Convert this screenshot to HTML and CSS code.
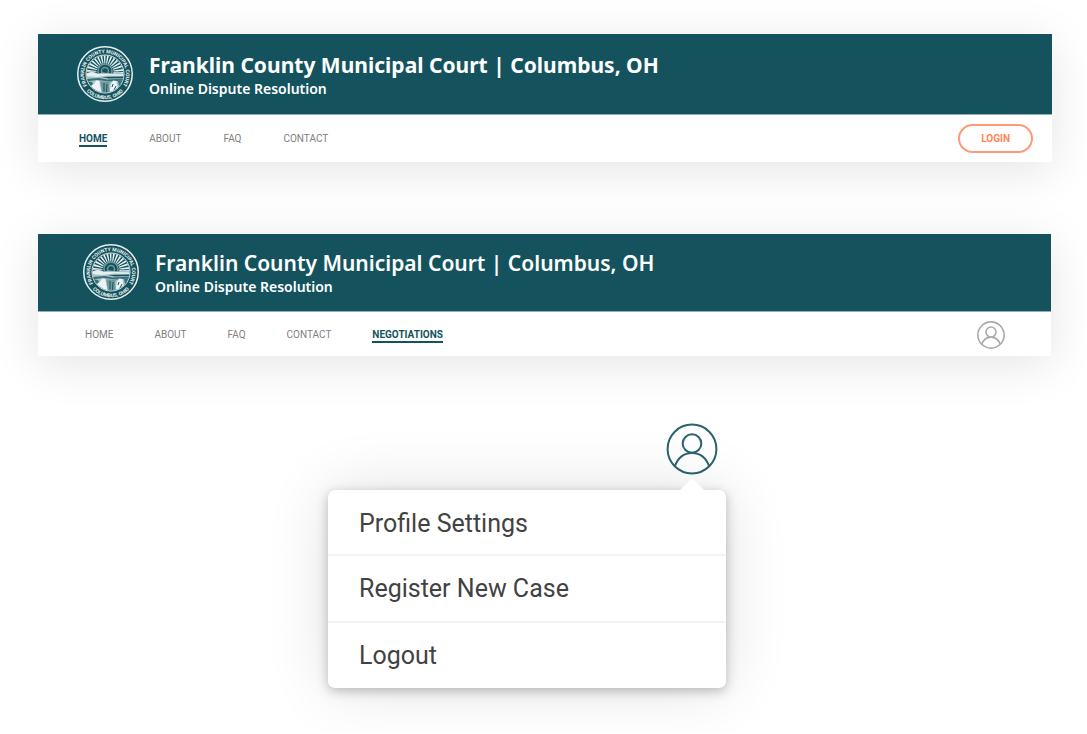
FILE: index.html
```html
<!DOCTYPE html>
<html lang="en">
<head>
<meta charset="utf-8">
<meta name="viewport" content="width=device-width, initial-scale=1">
<title>Franklin County Municipal Court | Columbus, OH</title>
<link rel="stylesheet" href="styles.css">
</head>
<body>
<svg class="sprites" width="0" height="0" aria-hidden="true">
  <symbol id="person" viewBox="0 0 52 52">
    <g fill="none" stroke="currentColor">
      <circle cx="26" cy="26" r="24.4"/>
      <circle cx="26" cy="20.5" r="9.3"/>
      <path d="M8.8 43.4 C12 34.5 18 30 26 30 C34 30 40 34.5 43.2 43.4"/>
    </g>
  </symbol>
</svg>

<main class="page">
  <header class="site-header">
    <div class="brand">
      <svg class="seal" viewBox="0 0 112 112" aria-hidden="true">
        <defs>
          <path id="arc-top" d="M26.3 85.7 A42 42 0 1 1 85.7 85.7"/>
          <path id="arc-bottom" d="M18 89 A50 50 0 0 0 94 89"/>
          <clipPath id="disc"><circle cx="56" cy="56" r="37"/></clipPath>
        </defs>
        <g id="seal">
          <circle cx="56" cy="56" r="54.5" fill="none" stroke="#e6eff0" stroke-width="3"/>
          <circle cx="56" cy="56" r="38" fill="#14535d" stroke="#dbe7e9" stroke-width="2"/>
          <g clip-path="url(#disc)">
            <circle cx="56" cy="52" r="27" fill="none" stroke="#e6eff0" stroke-width="20" stroke-dasharray="3 2.65"/>
            <circle cx="56" cy="50" r="14" fill="#14535d" stroke="#6f989e" stroke-width="3"/>
            <circle cx="56" cy="50" r="7" fill="none" stroke="#6f989e" stroke-width="3"/>
            <path d="M16 55 L30 51 L42 55 L52 53 L70 55 L80 51 L96 55 V96 H16 Z" fill="#a9c3c7"/>
            <path d="M16 56 L30 52 L42 56 L68 56 L96 57 V60 L62 59 L38 62 L16 60 Z" fill="#e6eff0"/>
            <path d="M16 66 L44 64 L60 67 L96 65 V69 L66 71 L40 68 L16 71 Z" fill="#35707a"/>
            <path d="M50 62 L96 61 V64 L64 65 Z" fill="#14535d"/>
            <path d="M24 80 L34 76 L38 69 L45 70 L46 80 L50 96 H18 Z M68 76 L72 69 L79 70 L80 80 L88 84 L82 96 H64 Z" fill="#edf4f5"/>
            <path d="M46 71 L66 71 L64 78 L66 94 L50 94 L48 80 Z" fill="#6f989e"/>
            <path d="M18 70 L30 72 L32 76 L24 84 Z M82 70 L94 68 L90 80 L84 80 Z" fill="#35707a"/>
            <path d="M72 76 L70 82 M78 80 L74 88 M54 74 V91 M60 76 L59 92" fill="none" stroke="#14535d" stroke-width="2"/>
          </g>
          <text class="seal-text"><textPath href="#arc-top" startOffset="50%">FRANKLIN COUNTY MUNICIPAL COURT</textPath></text>
          <text class="seal-text"><textPath href="#arc-bottom" startOffset="50%">COLUMBUS, OHIO</textPath></text>
        </g>
      </svg>
      <div class="brand-text">
        <div class="brand-title">Franklin County Municipal Court | Columbus, OH</div>
        <div class="brand-subtitle">Online Dispute Resolution</div>
      </div>
    </div>
    <div class="nav-bar">
      <nav class="nav" aria-label="Visitor">
        <a class="nav-link active" href="#home">HOME</a>
        <a class="nav-link" href="#about">ABOUT</a>
        <a class="nav-link" href="#faq">FAQ</a>
        <a class="nav-link" href="#contact">CONTACT</a>
      </nav>
      <button class="login" type="button">LOGIN</button>
    </div>
  </header>

  <header class="site-header compact">
    <div class="brand">
      <svg class="seal" viewBox="0 0 112 112" aria-hidden="true"><use href="#seal"/></svg>
      <div class="brand-text">
        <div class="brand-title">Franklin County Municipal Court | Columbus, OH</div>
        <div class="brand-subtitle">Online Dispute Resolution</div>
      </div>
    </div>
    <div class="nav-bar">
      <nav class="nav" aria-label="Member">
        <a class="nav-link" href="#home">HOME</a>
        <a class="nav-link" href="#about">ABOUT</a>
        <a class="nav-link" href="#faq">FAQ</a>
        <a class="nav-link" href="#contact">CONTACT</a>
        <a class="nav-link active" href="#negotiations">NEGOTIATIONS</a>
      </nav>
      <button class="avatar" type="button" aria-label="Account"><svg aria-hidden="true"><use href="#person"/></svg></button>
    </div>
  </header>

  <section class="account">
    <button class="avatar open" type="button" aria-label="Account menu" aria-expanded="true"><svg aria-hidden="true"><use href="#person"/></svg></button>
    <nav class="menu" aria-label="Account">
      <a class="menu-item" href="#profile">Profile Settings</a>
      <a class="menu-item" href="#register">Register New Case</a>
      <a class="menu-item" href="#logout">Logout</a>
    </nav>
  </section>
</main>
</body>
</html>
```
FILE: styles.css
```css
* { box-sizing: border-box; }

body {
  margin: 0;
  background: #fff;
  font-family: Roboto, "Liberation Sans", sans-serif;
}

.sprites { position: absolute; }

.page {
  display: flex;
  flex-direction: column;
  gap: 72px;
  padding: 34px 35px 45px 38px;
}

.site-header {
  background: #fff;
  box-shadow: 0 8px 48px rgba(0, 0, 0, 0.11);
}

.brand {
  display: flex;
  align-items: center;
  gap: 16px;
  height: 81px;
  padding-left: 39px;
  background: #14535d;
  border-bottom: 1px solid #8fb0b5;
  color: #fff;
  font-family: "Noto Sans", "Open Sans", sans-serif;
}

.seal {
  width: 56px;
  height: 56px;
  overflow: visible;
}

.seal-text {
  fill: #edf4f5;
  font: 700 10px Roboto, sans-serif;
  text-anchor: middle;
}

.brand-text { padding-top: 2px; }

.brand-title {
  font-size: 21px;
  font-weight: 700;
  line-height: 28px;
}

.brand-subtitle {
  font-size: 14px;
  font-weight: 600;
  line-height: 20px;
}

.nav-bar {
  display: flex;
  align-items: center;
  justify-content: space-between;
  height: 47px;
  padding: 0 19px 0 41px;
}

.nav {
  display: flex;
  gap: 42px;
}

.nav-link {
  padding-top: 2px;
  border-bottom: 2px solid transparent;
  color: #808080;
  font-size: 10px;
  line-height: 12px;
  text-decoration: none;
}

.nav-link.active {
  border-color: #14535d;
  color: #14535d;
  font-weight: 700;
}

.login {
  height: 29px;
  padding: 0 21px;
  border: 2px solid #ff9a76;
  border-radius: 15px;
  background: #fff;
  color: #ff8458;
  font: 700 10px Roboto, sans-serif;
}

.compact { margin-right: 1px; }

.compact .brand {
  height: 78px;
  padding: 0 0 2px 45px;
}

.compact .brand-title { font-weight: 600; }

.compact .nav-bar {
  height: 44px;
  padding: 2px 46px 0 47px;
}

.compact .nav { gap: 41px; }

.avatar {
  width: 28px;
  height: 28px;
  padding: 0;
  border: 0;
  border-radius: 50%;
  background: #fff;
  color: #aaa;
  stroke-width: 3px;
}

.avatar svg {
  display: block;
  width: 100%;
  height: 100%;
}

.account {
  display: flex;
  flex-direction: column;
  align-items: flex-end;
  gap: 15px;
  width: 398px;
  margin: -5px 0 0 290px;
}

.avatar.open {
  width: 52px;
  height: 52px;
  margin-right: 8px;
  color: #2a646d;
  stroke-width: 2px;
}

.menu {
  position: relative;
  width: 100%;
  border-radius: 7px;
  background: #fff;
  box-shadow: 0 3px 12px rgba(0, 0, 0, 0.25), 0 0 64px rgba(0, 0, 0, 0.12);
}

.menu::before {
  content: "";
  position: absolute;
  right: 22px;
  bottom: 100%;
  border: 12px solid transparent;
  border-top-width: 0;
  border-bottom-color: #fff;
}

.menu-item {
  display: block;
  padding: 17px 31px 16px;
  color: #424242;
  font-size: 25px;
  line-height: 32px;
  text-decoration: none;
}

.menu-item:first-child { padding: 18px 31px 14px; }

.menu-item + .menu-item { border-top: 2px solid #f3f3f3; }
```
